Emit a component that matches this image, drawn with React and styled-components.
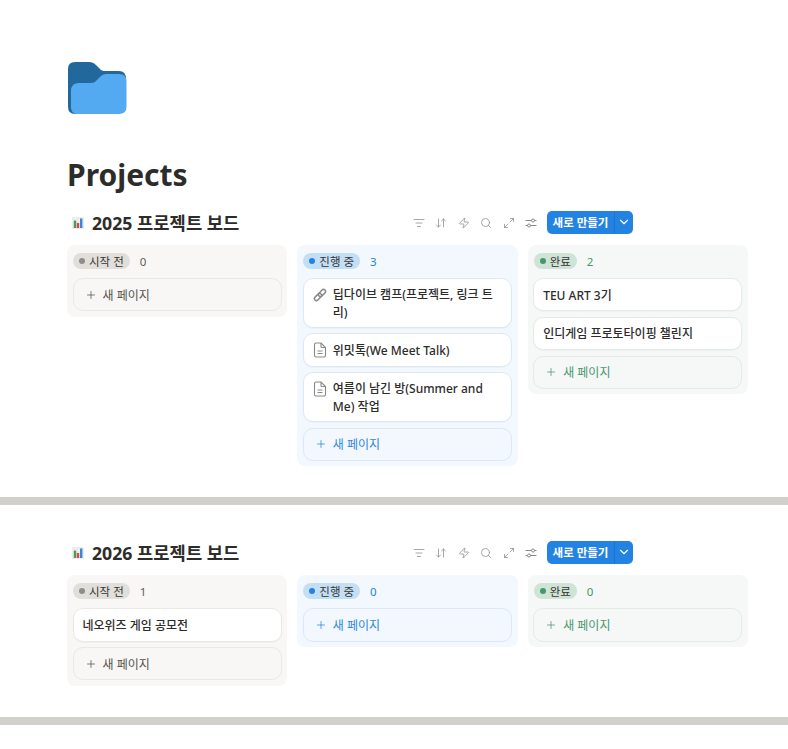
import React from 'react'
import styled, { createGlobalStyle } from 'styled-components'
import {
  ListFilter,
  ArrowDownUp,
  Zap,
  Search,
  Maximize2,
  ChevronDown,
  Plus,
} from 'lucide-react'

const GlobalStyle = createGlobalStyle`
  html, body {
    margin: 0;
    padding: 0;
    background: #fff;
  }
  body {
    font-family: "Noto Sans", "Noto Sans CJK KR", sans-serif;
    color: #2c2c2b;
  }
  * {
    box-sizing: border-box;
  }
`

const Page = styled.div`
  width: 788px;
  padding-top: 62px;
`
const Head = styled.div`
  padding: 0 40px 12px 67px;
`
const FolderWrap = styled.div`
  height: 52px;
  margin-bottom: 37px;
  padding-left: 1px;
`
const PageTitle = styled.h1`
  margin: 0;
  font-size: 30px;
  line-height: 48px;
  font-weight: 700;
  color: #2c2c2b;
`
const Board = styled.section`
  padding: ${(p) => (p.$first ? '0' : '36px')} 40px 31px 67px;
`
const BoardHead = styled.div`
  display: flex;
  align-items: center;
  height: 24px;
`
const ChartIcon = styled.span`
  display: flex;
  width: 12px;
  margin-left: 5px;
  margin-right: 8px;
`
const BoardTitle = styled.h2`
  margin: 0;
  font-size: 17.7px;
  font-weight: 700;
  line-height: 24px;
  flex: 1;
  color: #2c2c2b;
`
const Tools = styled.div`
  display: flex;
  align-items: center;
  gap: 10.4px;
  margin-right: 10px;
  color: #8a8986;
`
const NewButton = styled.div`
  display: flex;
  align-items: stretch;
  width: 86px;
  height: 23px;
  margin-right: 115px;
  margin-bottom: 2px;
  border-radius: 5px;
  background: #2383e2;
  color: #fff;
  font-size: 11.5px;
  font-weight: 600;
`
const NewLabel = styled.span`
  flex: 1;
  display: flex;
  align-items: center;
  justify-content: center;
  border-right: 1px solid #1f74c9;
`
const NewArrow = styled.span`
  width: 18px;
  display: flex;
  align-items: center;
  justify-content: center;
`
const Columns = styled.div`
  display: grid;
  grid-template-columns: repeat(3, 1fr);
  gap: 10px;
  align-items: start;
  margin-top: 10px;
`
const Column = styled.div`
  padding: 8px 5.5px 5.2px;
  border-radius: 8px;
  background: ${(p) => p.$bg};
`
const ColumnHead = styled.div`
  display: flex;
  align-items: center;
  height: 16px;
  margin-bottom: 9px;
  padding-left: 0.5px;
`
const Pill = styled.span`
  display: flex;
  align-items: center;
  height: 16px;
  padding: 0 6px;
  gap: 4px;
  border-radius: 8px;
  background: ${(p) => p.$bg};
  font-size: 11.5px;
  color: #37352f;
`
const Dot = styled.i`
  width: 6px;
  height: 6px;
  border-radius: 50%;
  background: ${(p) => p.$color};
`
const Count = styled.span`
  margin-left: 10px;
  font-size: 11.5px;
  color: ${(p) => p.$color};
`
const Card = styled.div`
  display: flex;
  gap: 6px;
  min-height: 33.4px;
  padding: 7px 9px 5px;
  margin-bottom: 5.4px;
  border-radius: 10px;
  background: #fff;
  border: 1px solid ${(p) => p.$border};
  box-shadow: 0 1px 1px rgba(0, 0, 0, 0.03);
  font-size: 12px;
  line-height: 18px;
  font-weight: 500;
  color: #2c2c2b;
`
const CardText = styled.span`
  align-self: center;
`
const CardIcon = styled.span`
  flex: none;
  width: 14px;
  height: 18px;
  display: flex;
  align-items: center;
  color: #8a8986;
`
const AddRow = styled.div`
  display: flex;
  align-items: center;
  gap: 6px;
  height: 33.4px;
  padding: 0 11px;
  border-radius: 10px;
  border: 1px solid ${(p) => p.$border};
  color: ${(p) => p.$color};
  font-size: 12px;
`
const Divider = styled.div`
  height: 8px;
  background: #d1d0ca;
`

const themes = {
  todo: {
    bg: '#f8f7f5',
    pill: '#e1dfdc',
    dot: '#8f8d89',
    count: '#5f5e5b',
    border: '#e9e8e5',
    add: '#55534e',
  },
  doing: {
    bg: '#f2f8fd',
    pill: '#c3dff5',
    dot: '#2383e2',
    count: '#2383e2',
    border: '#dce9f5',
    add: '#2f86dd',
  },
  done: {
    bg: '#f5f8f6',
    pill: '#cfe3d7',
    dot: '#41996c',
    count: '#41996c',
    border: '#e4ebe7',
    add: '#4a9670',
  },
}

const Folder = () => (
  <svg width="59" height="52" viewBox="0 0 59 52">
    <path
      d="M0 7Q0 0 7 0H21C24 0 26 1 28 3L32 7C33 8.5 35 9 37 9H51Q58 9 58 17V40H8V52H7Q0 52 0 45Z"
      fill="#22689d"
    />
    <path
      d="M3 29Q3 21 11 21H23C26 21 27 20 29 18L33 14C35 12.5 37 12 39 12H51Q58.5 12 58.5 19V45Q58.5 52 51 52H8Q3.5 51 3 46Z"
      fill="#53aaf0"
    />
  </svg>
)

const Chart = () => (
  <svg width="12" height="12" viewBox="0 0 12 12">
    <rect width="12" height="12" fill="#e9ecef" />
    <path d="M0 3.5H12M0 7H12M3.5 0V12M8 0V12" stroke="#f8f9fa" strokeWidth="0.6" />
    <rect x="1.8" y="3.5" width="2.4" height="7.5" fill="#4f9a58" />
    <rect x="4.8" y="6" width="2.4" height="5" fill="#d9484c" />
    <rect x="8" y="1.5" width="2.4" height="9.5" fill="#3a86d4" />
  </svg>
)

const Sliders = () => (
  <svg width="12" height="12" viewBox="0 0 12 12" fill="none" stroke="currentColor" strokeWidth="1">
    <path d="M0.5 3.5H6.5M9.5 3.5H11.5M0.5 8.5H2.5M5.5 8.5H11.5" />
    <circle cx="8" cy="3.5" r="1.5" />
    <circle cx="4" cy="8.5" r="1.5" />
  </svg>
)

const LinkIcon = () => (
  <svg width="14" height="14" viewBox="0 0 14 14" fill="none" stroke="currentColor" strokeWidth="1.5">
    <g transform="rotate(-45 7 7)">
      <rect x="0" y="5" width="8.4" height="4" rx="2" />
      <rect x="5.6" y="5" width="8.4" height="4" rx="2" />
    </g>
  </svg>
)

const DocIcon = () => (
  <svg width="14" height="16" viewBox="0 0 14 16" fill="none" stroke="currentColor" strokeWidth="1.1">
    <path d="M3 1H8L12.5 5.5V13.5A1.5 1.5 0 0 1 11 15H3A1.5 1.5 0 0 1 1.5 13.5V2.5A1.5 1.5 0 0 1 3 1Z" />
    <path d="M8 1V4.5A1 1 0 0 0 9 5.5H12.5M4.5 9H9.5M4.5 11.5H9.5" />
  </svg>
)

const boards = [
  {
    title: '2025 프로젝트 보드',
    columns: [
      { key: 'todo', label: '시작 전', count: 0, cards: [] },
      {
        key: 'doing',
        label: '진행 중',
        count: 3,
        cards: [
          { text: '딥다이브 캠프(프로젝트, 링크 트리)', icon: 'link' },
          { text: '위밋톡(We Meet Talk)', icon: 'doc' },
          { text: '여름이 남긴 방(Summer and Me) 작업', icon: 'doc' },
        ],
      },
      {
        key: 'done',
        label: '완료',
        count: 2,
        cards: [{ text: 'TEU ART 3기' }, { text: '인디게임 프로토타이핑 챌린지' }],
      },
    ],
  },
  {
    title: '2026 프로젝트 보드',
    columns: [
      { key: 'todo', label: '시작 전', count: 1, cards: [{ text: '네오위즈 게임 공모전' }] },
      { key: 'doing', label: '진행 중', count: 0, cards: [] },
      { key: 'done', label: '완료', count: 0, cards: [] },
    ],
  },
]

const App = () => {
  return (
    <Page>
      <GlobalStyle />
      <Head>
        <FolderWrap>
          <Folder />
        </FolderWrap>
        <PageTitle>Projects</PageTitle>
      </Head>
      {boards.map((board, i) => (
        <React.Fragment key={board.title}>
          <Board $first={i === 0}>
            <BoardHead>
              <ChartIcon>
                <Chart />
              </ChartIcon>
              <BoardTitle>{board.title}</BoardTitle>
              <Tools>
                <ListFilter size={12} strokeWidth={1.5} />
                <ArrowDownUp size={12} strokeWidth={1.5} />
                <Zap size={12} strokeWidth={1.5} />
                <Search size={12} strokeWidth={1.5} />
                <Maximize2 size={12} strokeWidth={1.5} />
                <Sliders />
              </Tools>
              <NewButton>
                <NewLabel>새로 만들기</NewLabel>
                <NewArrow>
                  <ChevronDown size={14} strokeWidth={2} />
                </NewArrow>
              </NewButton>
            </BoardHead>
            <Columns>
              {board.columns.map((col) => {
                const t = themes[col.key]
                return (
                  <Column key={col.key} $bg={t.bg}>
                    <ColumnHead>
                      <Pill $bg={t.pill}>
                        <Dot $color={t.dot} />
                        {col.label}
                      </Pill>
                      <Count $color={t.count}>{col.count}</Count>
                    </ColumnHead>
                    {col.cards.map((card) => (
                      <Card key={card.text} $border={t.border}>
                        {card.icon === 'link' && (
                          <CardIcon>
                            <LinkIcon />
                          </CardIcon>
                        )}
                        {card.icon === 'doc' && (
                          <CardIcon>
                            <DocIcon />
                          </CardIcon>
                        )}
                        <CardText>{card.text}</CardText>
                      </Card>
                    ))}
                    <AddRow $border={t.border} $color={t.add}>
                      <Plus size={12} strokeWidth={1.5} />
                      새 페이지
                    </AddRow>
                  </Column>
                )
              })}
            </Columns>
          </Board>
          <Divider />
        </React.Fragment>
      ))}
    </Page>
  )
}

export default App
